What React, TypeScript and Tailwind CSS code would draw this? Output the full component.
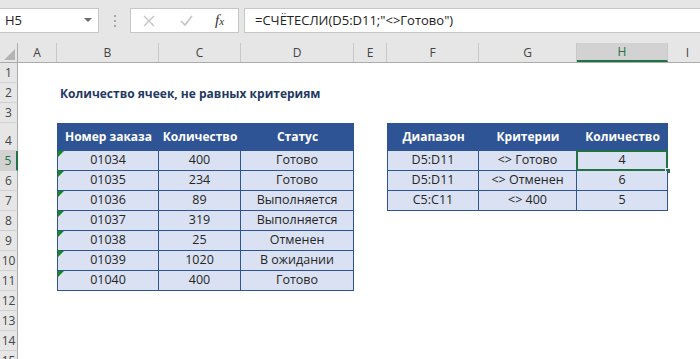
import React from 'react'

const cols = ['A', 'B', 'C', 'D', 'E', 'F', 'G', 'H', 'I']
const colWidths = ['w-[39px]', 'w-[102px]', 'w-[82px]', 'w-[113px]', 'w-[33px]', 'w-[92px]', 'w-[98px]', 'w-[91px]', 'w-[40px]']

const orders = [
  ['01034', '400', 'Готово'],
  ['01035', '234', 'Готово'],
  ['01036', '89', 'Выполняется'],
  ['01037', '319', 'Выполняется'],
  ['01038', '25', 'Отменен'],
  ['01039', '1020', 'В ожидании'],
  ['01040', '400', 'Готово'],
]

const criteria = [
  ['D5:D11', '<> Готово', '4'],
  ['D5:D11', '<> Отменен', '6'],
  ['C5:C11', '<> 400', '5'],
]

const cellFont = { fontFamily: '"Open Sans", "Noto Sans", sans-serif' }

const RowHeader = ({ n, tall }: { n: number; tall?: boolean }) => {
  const active = n === 5
  return (
    <div
      className={`w-[18px] shrink-0 flex items-end justify-center pb-[1px] text-[12px] leading-[16px] text-[#444] border-b border-[#d0d0d0] ${
        tall ? 'h-[28px]' : 'h-[20px]'
      } ${active ? 'bg-[#d2d2d2] border-r-2 border-r-[#217346] text-[#217346]' : 'bg-[#e6e6e6] border-r border-r-[#ababab]'}`}
    >
      {n}
    </div>
  )
}

const GreenMark = () => (
  <svg className="absolute left-0 top-0" width="6" height="6" viewBox="0 0 6 6">
    <polygon points="0,0 6,0 0,6" fill="#138a1c" />
  </svg>
)

type CellProps = { children?: React.ReactNode; className?: string }

const Cell = ({ children, className = '' }: CellProps) => (
  <div className={`relative shrink-0 flex items-center justify-center whitespace-nowrap ${className}`}>{children}</div>
)

const SheetRow = ({ n }: { n: number }) => {
  const tall = n === 4
  const h = tall ? 'h-[28px]' : 'h-[20px]'
  const cells: React.ReactNode[] = []

  cols.forEach((c, i) => {
    const w = colWidths[i]
    let node: React.ReactNode = <Cell key={c} className={`${w} ${h}`} />

    if (n === 2 && c === 'B') {
      node = (
        <Cell key={c} className={`${w} ${h} !justify-start overflow-visible`}>
          <span className="pl-[3px] pt-[2px] text-[12px] font-bold text-[#1f3864] z-10">
            Количество ячеек, не равных критериям
          </span>
        </Cell>
      )
    }

    // left table
    if (n === 4 && i >= 1 && i <= 3) {
      const labels = ['Номер заказа', 'Количество', 'Статус']
      node = (
        <Cell key={c} className={`${w} ${h} bg-[#2f5496] text-white font-bold text-[12px] ${i === 1 ? 'border-l border-[#2f5496]' : ''}`}>
          {labels[i - 1]}
        </Cell>
      )
    }
    if (n >= 5 && n <= 11 && i >= 1 && i <= 3) {
      const row = orders[n - 5]
      node = (
        <Cell
          key={c}
          className={`${w} ${h} bg-[#d9e1f2] text-[12.5px] text-[#262626] border-b border-r border-[#2f5496] ${i === 1 ? 'border-l' : ''}`}
        >
          {i === 1 && <GreenMark />}
          {row[i - 1]}
        </Cell>
      )
    }

    // right table
    if (n === 4 && i >= 5 && i <= 7) {
      const labels = ['Диапазон', 'Критерии', 'Количество']
      node = (
        <Cell key={c} className={`${w} ${h} bg-[#2f5496] text-white font-bold text-[12px] ${i === 5 ? 'border-l border-[#2f5496]' : ''}`}>
          {labels[i - 5]}
        </Cell>
      )
    }
    if (n >= 5 && n <= 7 && i >= 5 && i <= 7) {
      const row = criteria[n - 5]
      node = (
        <Cell
          key={c}
          className={`${w} ${h} bg-[#d9e1f2] text-[12.5px] text-[#262626] border-b border-r border-[#2f5496] ${i === 5 ? 'border-l' : ''}`}
        >
          {row[i - 5]}
          {n === 5 && i === 7 && (
            <>
              <div className="absolute left-[-1px] top-[-1px] right-[-1px] bottom-[-1px] border-2 border-[#217346]" />
              <div className="absolute right-[-4px] bottom-[-4px] w-[6px] h-[6px] bg-[#217346] border border-white" />
            </>
          )}
        </Cell>
      )
    }

    cells.push(node)
  })

  return (
    <div className="flex" style={cellFont}>
      <RowHeader n={n} tall={tall} />
      {cells}
    </div>
  )
}

export default function App() {
  const rows = [1, 2, 3, 4, 5, 6, 7, 8, 9, 10, 11, 12, 13, 14, 15]

  return (
    <div className="w-[700px] h-[359px] overflow-hidden bg-white" style={{ fontFamily: '"Open Sans", "Noto Sans", sans-serif' }}>
      {/* formula bar */}
      <div className="h-[43px] bg-[#e6e6e6] flex items-start pt-[8px]">
        <div className="w-[99px] h-[25px] bg-white border border-l-0 border-[#c6c6c6] flex items-center justify-between pl-[5px] pr-[6px]">
          <span className="text-[13px] text-[#222]">H5</span>
          <svg width="8" height="5" viewBox="0 0 8 5">
            <polygon points="0,0 8,0 4,4" fill="#6b6b6b" />
          </svg>
        </div>
        <div className="w-[31px] h-[25px] flex flex-col items-center justify-center gap-[3px]">
          <div className="w-[2px] h-[2px] bg-[#a8a8a8]" />
          <div className="w-[2px] h-[2px] bg-[#a8a8a8]" />
          <div className="w-[2px] h-[2px] bg-[#a8a8a8]" />
        </div>
        <div className="w-[109px] h-[25px] bg-white border border-[#c6c6c6] flex items-center pl-[12px]">
          <svg width="12" height="12" viewBox="0 0 12 12">
            <path d="M1 1 L11 11 M11 1 L1 11" stroke="#c3c3c3" strokeWidth="1.3" />
          </svg>
          <svg className="ml-[25px]" width="13" height="11" viewBox="0 0 13 11">
            <path d="M1 6 L5 10 L12 1" stroke="#c3c3c3" strokeWidth="1.6" fill="none" />
          </svg>
          <span className="ml-[22px] text-[15px] italic text-[#333] leading-none" style={{ fontFamily: '"Liberation Serif", serif' }}>
            f<span className="text-[11px]">x</span>
          </span>
        </div>
        <div className="ml-[5px] flex-1 h-[25px] bg-white border border-r-0 border-[#c6c6c6] flex items-center pl-[10px]">
          <span className="text-[13px] text-[#222]">=СЧЁТЕСЛИ(D5:D11;"&lt;&gt;Готово")</span>
        </div>
      </div>

      {/* column headers */}
      <div className="flex h-[20px] bg-[#e6e6e6] border-b border-[#ababab]">
        <div className="w-[18px] shrink-0 border-r border-[#ababab] relative">
          <svg className="absolute right-[2px] bottom-[2px]" width="11" height="11" viewBox="0 0 11 11">
            <polygon points="11,0 11,11 0,11" fill="#b4b4b4" />
          </svg>
        </div>
        {cols.map((c, i) => (
          <div
            key={c}
            className={`${colWidths[i]} shrink-0 flex items-center justify-center text-[12px] text-[#444] border-r border-[#c8c8c8] ${
              c === 'H' ? 'bg-[#d2d2d2] border-b-2 border-b-[#217346] text-[#217346]' : ''
            }`}
          >
            {c}
          </div>
        ))}
      </div>

      {rows.map((n) => (
        <SheetRow key={n} n={n} />
      ))}
    </div>
  )
}
